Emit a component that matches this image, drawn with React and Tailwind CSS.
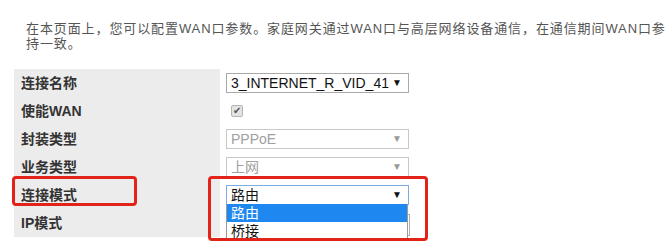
// App.jsx — WAN 配置页截图复刻

const font = "font-['Liberation_Sans','Noto_Sans_CJK_SC',sans-serif]";

function Arrow({ muted }) {
  return (
    <span className={`text-[10px] leading-none ${muted ? "text-[#9a9a9a]" : "text-[#111]"}`}>▼</span>
  );
}

function Select({ value, muted, active }) {
  return (
    <div
      className={`flex items-center justify-between w-[183px] h-[20px] pl-[4px] pr-[6px] bg-white border ${
        active ? "border-[#7aaee0]" : muted ? "border-[#c8c8c8]" : "border-[#a9a9a9]"
      }`}
    >
      <span className={`text-[14px] leading-none ${muted ? "text-[#a0a0a0]" : "text-[#111]"}`}>{value}</span>
      <Arrow muted={muted} />
    </div>
  );
}

const rows = [
  { label: "连接名称", field: <Select value="3_INTERNET_R_VID_41" /> },
  {
    label: "使能WAN",
    field: (
      <div className="ml-[5px] w-[12px] h-[12px] rounded-[2px] border border-[#b5b5b5] bg-[#e4e4e4] flex items-center justify-center text-[10px] leading-none text-[#555]">
        ✔
      </div>
    ),
  },
  { label: "封装类型", field: <Select value="PPPoE" muted /> },
  { label: "业务类型", field: <Select value="上网" muted /> },
  { label: "连接模式", field: <Select value="路由" active /> },
  { label: "IP模式", field: <div className="w-[184px] h-[22px] mt-[4px] bg-white border border-[#b0b0b0]" /> },
];

export default function App() {
  return (
    <div className={`relative w-[669px] h-[241px] bg-white overflow-hidden ${font}`}>
      <div className="pt-[21px] pl-[26px] w-[669px] text-[13px] leading-[15px] tracking-[0.9px] text-[#555]">
        <p>在本页面上，您可以配置WAN口参数。家庭网关通过WAN口与高层网络设备通信，在通信期间WAN口参持一致。</p>
      </div>

      <div className="mt-[18px] ml-[14px] flex flex-col">
        {rows.map((r) => (
          <div key={r.label} className="flex h-[28px]">
            <div className="w-[206px] bg-[#ececec] flex items-center pl-[7px] text-[14px] font-bold text-[#333]">
              {r.label}
            </div>
            <div className="pl-[6px] flex items-center">{r.field}</div>
          </div>
        ))}
      </div>

      {/* 下拉列表 */}
      <div className="absolute left-[226px] top-[204px] w-[182px] border border-[#9a9a9a] border-t-0 bg-white text-[14px] leading-[18px]">
        <div className="bg-[#1e88f0] text-white pl-[4px]">路由</div>
        <div className="text-[#111] pl-[4px]">桥接</div>
      </div>

      {/* 红框标注 */}
      <div className="absolute left-[12px] top-[176px] w-[125px] h-[30px] border-[3px] border-[#e2231a] rounded-[4px]" />
      <div className="absolute left-[208px] top-[176px] w-[220px] h-[65px] border-[3px] border-[#e2231a] rounded-[4px]" />
    </div>
  );
}
